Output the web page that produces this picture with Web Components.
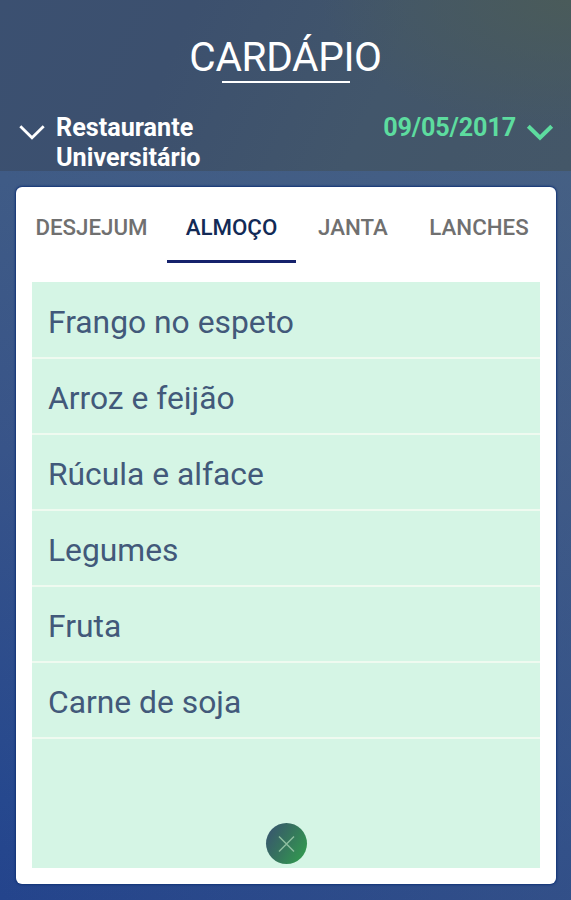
<!DOCTYPE html>
<html lang="pt-BR">
<head>
<meta charset="utf-8">
<title>Cardápio</title>
<style>
html,body{margin:0;height:100%}
body{font-family:Roboto,"Liberation Sans",sans-serif;overflow:hidden}
</style>
</head>
<body>
<menu-page></menu-page>
<script>
const define = (name, html) => customElements.define(name, class extends HTMLElement {
  constructor() {
    super();
    const t = document.createElement('template');
    t.innerHTML = html;
    this.attachShadow({mode: 'open'}).append(t.content.cloneNode(true));
  }
});

define('chevron-icon', `<style>
:host{display:block;width:28px;height:18px;flex:none}
svg{display:block;overflow:visible}
path{stroke-width:var(--chevron-weight,2.8)}
</style><svg width="28" height="18" viewBox="0 0 28 18"><path d="M2.3 2.3 14 13.8 25.7 2.3" fill="none" stroke="currentColor"/></svg>`);

define('place-picker', `<style>
:host{display:flex;color:#fff;font-weight:700;font-size:25.2px;line-height:30px}
chevron-icon{margin:11px 10px 0 0}
span{display:block;width:165px}
</style><chevron-icon></chevron-icon><span><slot></slot></span>`);

define('date-picker', `<style>
:host{display:flex;color:#5ddc9f;font-weight:700;font-size:25.2px;line-height:30px;--chevron-weight:4}
chevron-icon{margin:11px 0 0 10px}
span{letter-spacing:-.15px}
</style><span><slot></slot></span><chevron-icon></chevron-icon>`);

define('page-header', `<style>
:host{display:block;height:171px;box-sizing:border-box;padding-top:34px;
background:radial-gradient(ellipse 250px 130px at 100% 0,#4a5b5a 0,#4a5b5a00 100%),linear-gradient(115deg,#3b5071 0,#3c506e 30%,#42566b 65%,#435669 80%,#445768 100%)}
h1{margin:0 auto;width:max-content;font-size:40.6px;line-height:47px;font-weight:400;color:#fff;letter-spacing:-.35px}
hr{width:128px;height:2px;border:0;background:#fff;margin:0 auto}
.row{display:flex;justify-content:space-between;padding:30px 17px 0 18px}
</style><h1><slot></slot></h1><hr><div class="row"><slot name="pickers"></slot><slot name="date"></slot></div>`);

define('meal-tab', `<style>
:host{display:flex;justify-content:center;box-sizing:border-box;height:76px;padding-top:25px;font-size:22.3px;line-height:30px;font-weight:500;color:#707070;border-bottom:3px solid transparent}
:host([active]){color:#132a56;border-color:#16226c}
</style><slot></slot>`);

define('meal-tabs', `<style>
:host{display:grid;grid-template-columns:151px 129px 114px 138px;height:95px;align-items:start}
</style><slot></slot>`);

define('dish-item', `<style>
:host{display:block;box-sizing:border-box;height:76px;padding:19px 16px 0;font-size:31.8px;line-height:40px;color:#42597a;border-bottom:2px solid #effaf0}
</style><slot></slot>`);

define('close-button', `<style>
:host{display:block;width:41px;height:41px;border-radius:50%;background:linear-gradient(120deg,#38566f 8%,#36705f 42%,#329750 88%)}
svg{display:block}
</style><svg width="41" height="41" viewBox="0 0 41 41"><path d="M13 13.5 28 28.5M28 13.5 13 28.5" stroke="#8dbd9f" stroke-width="1.5" fill="none"/></svg>`);

define('dish-list', `<style>
:host{display:flex;flex-direction:column;box-sizing:border-box;height:586px;margin:0 16px;background:#d5f5e5;padding:1px 0 4px}
close-button{margin:auto auto 0}
</style><slot></slot><close-button></close-button>`);

define('menu-card', `<style>
:host{display:block;height:697px;margin:16px 15px 0 16px;border-radius:6px;background:#fff;box-shadow:0 0 2px 1px #123477}
</style><slot></slot>`);

define('menu-page', `<style>
:host{display:block;height:900px;overflow:hidden;background:linear-gradient(to right,#0000 0,#52698050 100%),linear-gradient(to bottom,#41597d 0,#3f5b86 180px,#385489 450px,#26488e 800px,#24448c 900px)}
</style>
<page-header>CARDÁPIO
<place-picker slot="pickers">Restaurante Universitário</place-picker>
<date-picker slot="date">09/05/2017</date-picker>
</page-header>
<menu-card>
<meal-tabs><meal-tab>DESJEJUM</meal-tab><meal-tab active>ALMOÇO</meal-tab><meal-tab>JANTA</meal-tab><meal-tab>LANCHES</meal-tab></meal-tabs>
<dish-list><dish-item>Frango no espeto</dish-item><dish-item>Arroz e feijão</dish-item><dish-item>Rúcula e alface</dish-item><dish-item>Legumes</dish-item><dish-item>Fruta</dish-item><dish-item>Carne de soja</dish-item></dish-list>
</menu-card>`);
</script>
</body>
</html>
